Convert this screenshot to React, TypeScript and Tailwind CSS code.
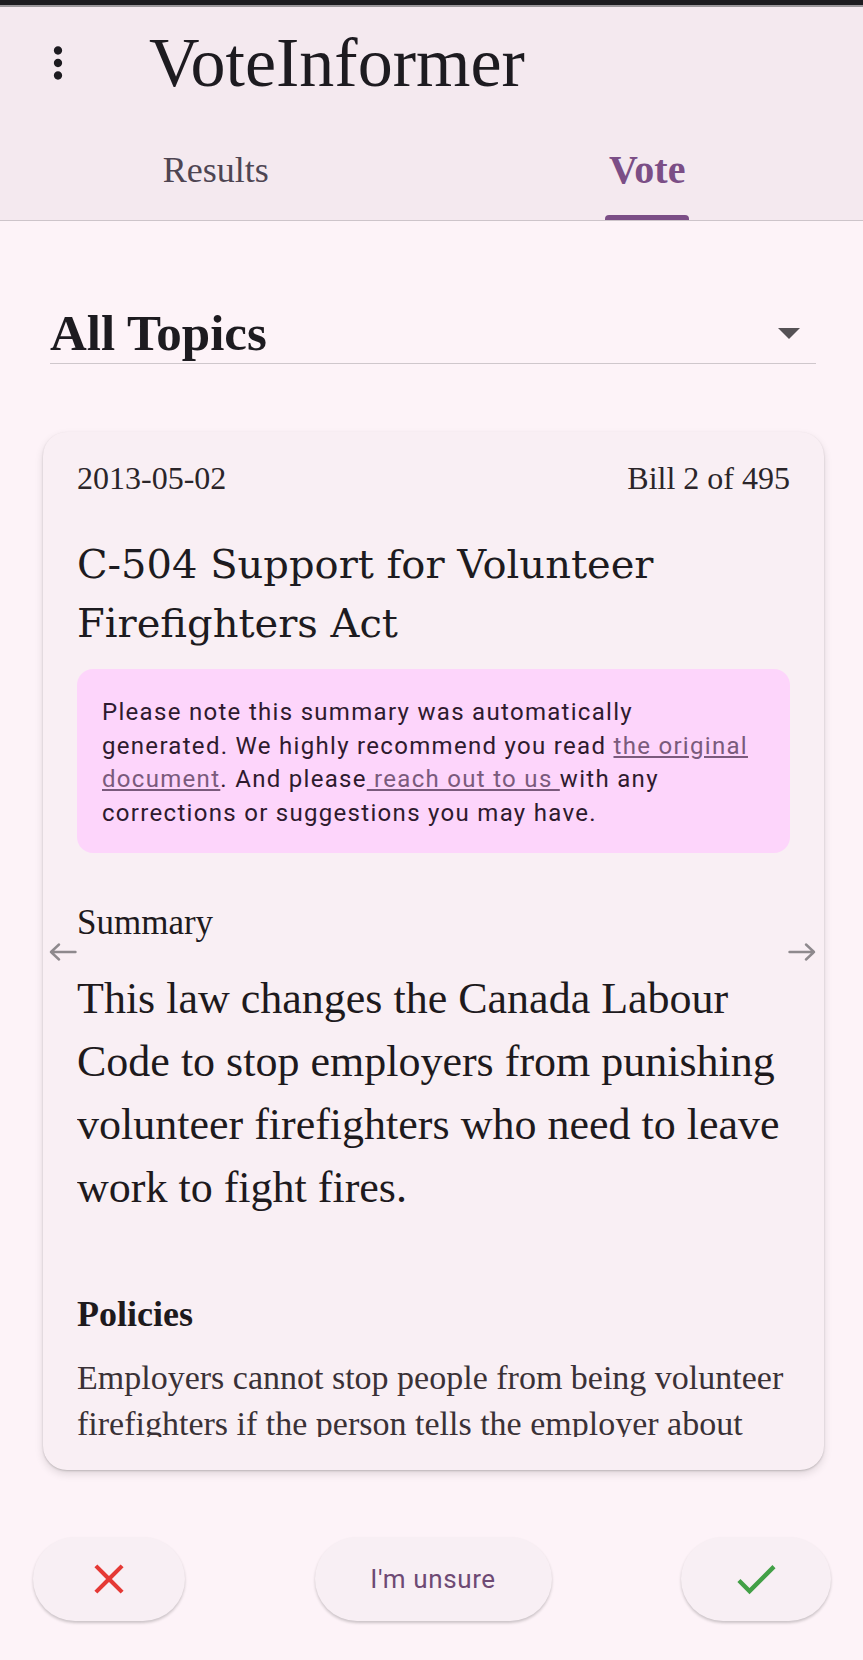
const MoreVert = () => (
  <svg width="50" height="50" viewBox="0 0 24 24" fill="#1d1b20">
    <path d="M12 8c1.1 0 2-.9 2-2s-.9-2-2-2-2 .9-2 2 .9 2 2 2zm0 2c-1.1 0-2 .9-2 2s.9 2 2 2 2-.9 2-2-.9-2-2-2zm0 6c-1.1 0-2 .9-2 2s.9 2 2 2 2-.9 2-2-.9-2-2-2z" />
  </svg>
);

const Arrow = ({ dir }: { dir: 'left' | 'right' }) => (
  <svg
    width="28"
    height="18"
    viewBox="0 0 28 18"
    fill="none"
    stroke="#8e898d"
    strokeWidth="2.4"
    strokeLinecap="round"
    strokeLinejoin="round"
    className={dir === 'right' ? 'rotate-180' : ''}
  >
    <path d="M26.5 9H2 M10 1.5L2 9l8 7.5" />
  </svg>
);

const CloseIcon = () => (
  <svg width="50" height="50" viewBox="0 0 24 24" fill="#e53935">
    <path d="M19 6.41L17.59 5 12 10.59 6.41 5 5 6.41 10.59 12 5 17.59 6.41 19 12 13.41 17.59 19 19 17.59 13.41 12z" />
  </svg>
);

const CheckIcon = () => (
  <svg width="52" height="52" viewBox="0 0 24 24" fill="#43a047">
    <path d="M9 16.17L4.83 12l-1.42 1.41L9 19 21 7l-1.41-1.41z" />
  </svg>
);

const App = () => {
  return (
    <div className="w-full h-[1660px] bg-[#fdf3f8] flex flex-col overflow-hidden font-['Liberation_Serif',serif] text-[#1e1a1d]">
      {/* status strip */}
      <div className="h-[5px] bg-[#1c1b1f]"></div>
      <div className="h-[2px] bg-[#9a969a]"></div>

      <header className="bg-[#f4e9ef] border-b border-[#cdc4ca]">
        <div className="h-[112px] flex items-center pl-[33px]">
          <MoreVert />
          <h1 className="ml-[66px] text-[70px] leading-[70px] text-[#1d1b20]">VoteInformer</h1>
        </div>
        <nav className="h-[101px] flex">
          <div className="flex-1 flex items-center justify-center text-[36px] text-[#4e4552]">Results</div>
          <div className="flex-1 relative flex items-center justify-center">
            <span className="text-[40px] font-bold text-[#7b4e86]">Vote</span>
            <div className="absolute bottom-0 left-1/2 -translate-x-1/2 w-[84px] h-[5px] rounded-t-[4px] bg-[#7b4e86]"></div>
          </div>
        </nav>
      </header>

      <main className="flex-1 flex flex-col">
        <div className="mt-[82px] ml-[50px] mr-[47px] h-[61px] border-b border-[#cfc7cc] flex items-center justify-between pr-[16px]">
          <span className="text-[51px] leading-[60px] font-bold text-[#1d1b20]">All Topics</span>
          <svg width="22" height="11" viewBox="0 0 22 11" fill="#555155">
            <path d="M0 0h22L11 11z" />
          </svg>
        </div>

        <div className="relative mt-[68px] ml-[43px] mr-[39px] h-[1038px] rounded-[24px] bg-[#f9eff4] shadow-[0_1px_2px_rgba(0,0,0,0.18),0_4px_8px_rgba(0,0,0,0.12)] pt-[26px] pb-[33px] px-[34px]">
          <div className="h-full overflow-hidden flex flex-col">
            <div className="flex justify-between text-[32px] leading-[40px] text-[#2b2529]">
              <span>2013-05-02</span>
              <span>Bill 2 of 495</span>
            </div>

            <h2 className="mt-[37px] font-['DejaVu_Serif',serif] text-[40px] leading-[59px] text-[#1d1b20]">
              C-504 Support for Volunteer Firefighters Act
            </h2>

            <div className="mt-[16px] rounded-[16px] bg-[#fdd5fb] pl-[25px] pr-[12px] pt-[27px] pb-[23px] font-['Roboto',sans-serif] text-[24px] leading-[33.5px] tracking-[1.3px] text-[#2e1a2e]">
              Please note this summary was automatically
              <br />
              generated. We highly recommend you read <a className="underline text-[#7a5a7c]">the original</a>
              <br />
              <a className="underline text-[#7a5a7c]">document</a>. And please<a className="underline text-[#7a5a7c]"> reach out to us </a>with any
              <br />
              corrections or suggestions you may have.
            </div>

            <h3 className="mt-[50px] text-[35px] leading-[40px]">Summary</h3>
            <p className="mt-[24px] text-[44px] leading-[63px]">
              This law changes the Canada Labour Code to stop employers from punishing volunteer firefighters who need to leave work to fight fires.
            </p>

            <h3 className="mt-[73px] text-[36px] leading-[44px] font-semibold">Policies</h3>
            <p className="mt-[19px] text-[34px] leading-[46px] text-[#3a3136]">
              Employers cannot stop people from being volunteer firefighters if the person tells the employer about their volunteer work.
            </p>
          </div>

          <div className="absolute top-[511px] left-[6px]">
            <Arrow dir="left" />
          </div>
          <div className="absolute top-[511px] right-[8px]">
            <Arrow dir="right" />
          </div>
        </div>

        <div className="mt-[67px] flex justify-between pl-[33px] pr-[32px]">
          <button className="w-[152px] h-[84px] rounded-full bg-[#f8eff4] shadow-[0_2px_3px_rgba(0,0,0,0.2)] flex items-center justify-center">
            <CloseIcon />
          </button>
          <button className="w-[237px] h-[84px] rounded-full bg-[#f8eff4] shadow-[0_2px_3px_rgba(0,0,0,0.2)] flex items-center justify-center font-['Roboto',sans-serif] text-[26px] tracking-[0.6px] text-[#6e4a74]">
            I'm unsure
          </button>
          <button className="w-[150px] h-[84px] rounded-full bg-[#f8eff4] shadow-[0_2px_3px_rgba(0,0,0,0.2)] flex items-center justify-center">
            <CheckIcon />
          </button>
        </div>
      </main>
    </div>
  );
};

export default App;
